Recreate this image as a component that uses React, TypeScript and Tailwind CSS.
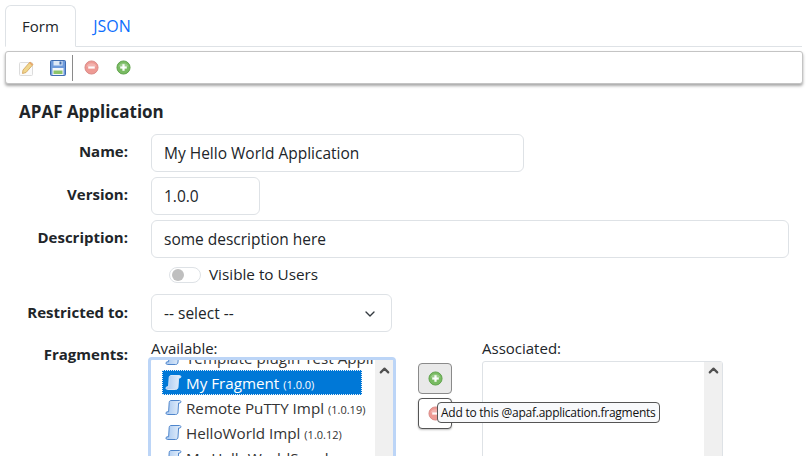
import { ChevronDown, ChevronUp } from 'lucide-react';

const font = { fontFamily: '"Open Sans", "Noto Sans", sans-serif' };

function PencilIcon() {
  return (
    <svg width="18" height="18" viewBox="0 0 18 18">
      <rect x="1.5" y="3.5" width="13" height="13" rx="1" fill="#fbfbfb" stroke="#dcdcdc" />
      <path d="M5 11 L12 3 L15 5.5 L8 13.5 L4.5 14.5 Z" fill="#f0d68c" stroke="#d9ae6a" strokeWidth="1" />
      <path d="M12 3 L15 5.5 L14 6.6 L11 4.1 Z" fill="#e8a56c" />
    </svg>
  );
}

function SaveIcon() {
  return (
    <svg width="18" height="18" viewBox="0 0 18 18">
      <rect x="1.5" y="1.5" width="15" height="15" rx="1" fill="#6f9bdc" stroke="#3f6cb0" />
      <rect x="4.5" y="2" width="9" height="4.5" fill="#dfe9f6" />
      <rect x="10.5" y="2.5" width="2" height="3" fill="#3f6cb0" />
      <rect x="3.5" y="9" width="11" height="7" fill="#f4f7fb" />
      <rect x="4.5" y="11.5" width="9" height="3.5" fill="#8cc46a" />
    </svg>
  );
}

function RoundIcon({ tone, plus }: { tone: 'red' | 'green'; plus?: boolean }) {
  const fill = tone === 'red' ? '#ee9a94' : '#79bb62';
  const edge = tone === 'red' ? '#d98a86' : '#5ea14b';
  return (
    <svg width="15" height="15" viewBox="0 0 16 16">
      <circle cx="8" cy="8" r="7" fill={fill} stroke={edge} />
      <path d="M2.5 7 A6 6 0 0 1 13.5 7 Z" fill="#ffffff" opacity="0.25" />
      <rect x="4.5" y="6.8" width="7" height="2.4" fill="#ffffff" opacity="0.95" />
      {plus && <rect x="6.8" y="4.5" width="2.4" height="7" fill="#ffffff" opacity="0.95" />}
    </svg>
  );
}

// parchment scroll used for fragments
function ScrollIcon({ light }: { light?: boolean }) {
  const stroke = light ? '#d5e5f8' : '#4f86cc';
  return (
    <svg width="17" height="17" viewBox="0 0 17 17" className="shrink-0">
      <defs>
        <linearGradient id="scrollFill" x1="0" y1="0" x2="1" y2="0">
          <stop offset="0" stopColor="#a8c8f0" />
          <stop offset="1" stopColor="#e6f0fb" />
        </linearGradient>
      </defs>
      <path
        d="M6 1.5 H14.5 C16 1.5 16.5 3.5 15 4 H13.6 L13 13 C12.9 15 11.8 15.5 10.5 15.5 H2.5 C.8 15.5 .3 13.3 2 12.8 H3.6 L4.2 3.5 C4.3 2.2 5 1.5 6 1.5 Z"
        fill="url(#scrollFill)"
        stroke={stroke}
        strokeWidth="1"
      />
    </svg>
  );
}

function Field({ label, children, className, labelClass }: { label: string; children: React.ReactNode; className?: string; labelClass?: string }) {
  return (
    <div className={`flex items-start ${className ?? ''}`}>
      <label className={`w-[128px] shrink-0 text-right text-[15px] leading-[21px] font-bold text-[#212529] ${labelClass ?? 'pt-[7px]'}`}>
        {label}
      </label>
      <div className="ml-[23px] min-w-0 flex-1">{children}</div>
    </div>
  );
}

function TextBox({ value, className }: { value: string; className: string }) {
  return (
    <div className={`flex h-[38px] items-center rounded-md border border-[#dee2e6] bg-white px-[12px] pt-[1px] text-[15.5px] text-[#212529] ${className}`}>
      {value}
    </div>
  );
}

function Scrollbar({ className }: { className: string }) {
  return (
    <div className={`flex w-[18px] shrink-0 justify-center bg-[#f0f0f0] text-[#505050] ${className}`}>
      <ChevronUp size={15} strokeWidth={3.5} />
    </div>
  );
}

function FragmentRow({ name, version }: { name: string; version: string }) {
  return (
    <div className="flex h-[25px] items-center gap-[4px] pl-[14px] text-[15.2px] whitespace-nowrap text-[#333]">
      <ScrollIcon />
      <span className="pt-[2px]">
        {name} <span className="text-[11px]">({version})</span>
      </span>
    </div>
  );
}

export default function App() {
  return (
    <div className="h-[456px] w-[812px] overflow-hidden bg-white" style={font}>
      <div className="px-[5px] pt-[5px]">
        {/* Tabs */}
        <div className="flex h-[42px] w-[797px] border-b border-[#dee2e6] text-[15px]">
          <div className="flex h-[42px] w-[71px] items-center justify-center rounded-t-md border border-[#dee2e6] border-b-white bg-white text-[#212529]">
            Form
          </div>
          <div className="flex h-[41px] w-[72px] items-center justify-center text-[16px] text-[#0d6efd]">JSON</div>
        </div>

        {/* Toolbar */}
        <div className="mt-[4px] flex h-[33px] w-[798px] items-center rounded-[3px] border border-[#c4c4c4] bg-white pl-[12px] shadow-[0_2px_3px_rgba(0,0,0,0.35)]">
          <PencilIcon />
          <div className="ml-[13px]"><SaveIcon /></div>
          <div className="ml-[5px] h-[26px] w-px bg-[#8a8a8a]" />
          <div className="ml-[11px]"><RoundIcon tone="red" /></div>
          <div className="ml-[17px]"><RoundIcon tone="green" plus /></div>
        </div>
      </div>

      <h2 className="mt-[16px] pl-[19px] text-[17px] leading-[24px] font-bold text-[#212529]">APAF Application</h2>

      <div className="mt-[10px] w-[789px]">
        <Field label="Name:">
          <TextBox value="My Hello World Application" className="w-[373px]" />
        </Field>
        <Field label="Version:" className="mt-[5px]">
          <TextBox value="1.0.0" className="w-[109px]" />
        </Field>
        <Field label="Description:" className="mt-[5px]">
          <TextBox value="some description here" className="w-full" />
        </Field>

        {/* Visible toggle */}
        <div className="mt-[6px] ml-[169px] flex h-[21px] items-center gap-[8px]">
          <div className="flex h-[16px] w-[32px] items-center rounded-full border border-[#dee2e6] pl-[2px]">
            <div className="h-[12px] w-[12px] rounded-full bg-[#bfbfbf]" />
          </div>
          <span className="text-[15.3px] text-[#212529]">Visible to Users</span>
        </div>

        <Field label="Restricted to:" className="mt-[9px]" labelClass="pt-[8px]">
          <div className="flex h-[38px] w-[241px] items-center justify-between rounded-md border border-[#dee2e6] bg-white pt-[1px] pr-[13px] pl-[12px] text-[15.5px] text-[#212529]">
            -- select --
            <ChevronDown size={16} strokeWidth={2} className="text-[#343a40]" />
          </div>
        </Field>

        <div className="mt-[6px] flex h-[120px] items-start">
          <label className="w-[128px] shrink-0 pt-[6px] text-right text-[15px] leading-[21px] font-bold text-[#212529]">
            Fragments:
          </label>
          <div className="relative ml-[23px] flex">
            {/* Available */}
            <div className="w-[244px]">
              <div className="h-[21px] text-[15px] leading-[20px] text-[#212529]">Available:</div>
              <div className="-mt-[2px] -ml-[3px] flex h-[112px] w-[248px] rounded-[4px] border-[3px] border-[#bcd5f7] bg-white">
                <div className="min-w-0 flex-1 overflow-hidden">
                  <div className="-mt-[15px] flex h-[25px] items-center gap-[4px] pl-[14px] text-[15.2px] whitespace-nowrap text-[#333]">
                    <ScrollIcon />
                    <span className="pt-[2px]">Template plugin Test Appli</span>
                  </div>
                  <div className="ml-[11px] flex h-[25px] w-[200px] items-center gap-[4px] border border-dotted border-[#e8f0fa] bg-[#0078d7] pl-[2px] text-[15.2px] whitespace-nowrap text-white">
                    <ScrollIcon light />
                    <span className="pt-[2px]">
                      My Fragment <span className="text-[11px]">(1.0.0)</span>
                    </span>
                  </div>
                  <FragmentRow name="Remote PuTTY Impl" version="1.0.19" />
                  <FragmentRow name="HelloWorld Impl" version="1.0.12" />
                  <FragmentRow name="My HelloWorldSpeak" version="1.0.1" />
                </div>
                <Scrollbar className="pt-[3px]" />
              </div>
            </div>

            {/* Move buttons */}
            <div className="mt-[25px] ml-[23px] flex w-[34px] flex-col gap-[4px]">
              <div className="flex h-[31px] items-center justify-center rounded-[4px] border border-[#8a8a8a] bg-[#e9e9e9]">
                <RoundIcon tone="green" plus />
              </div>
              <div className="flex h-[31px] items-center justify-center rounded-[4px] border border-[#555] bg-white shadow-[0_1px_2px_rgba(0,0,0,0.25)]">
                <RoundIcon tone="red" />
              </div>
            </div>

            {/* Associated */}
            <div className="ml-[30px] w-[241px]">
              <div className="h-[21px] text-[15px] leading-[20px] text-[#212529]">Associated:</div>
              <div className="mt-[2px] flex h-[110px] rounded-t-[3px] border border-[#dee2e6] bg-white">
                <div className="flex-1" />
                <Scrollbar className="pt-[1px]" />
              </div>
            </div>

            {/* Tooltip */}
            <div className="absolute top-[64px] left-[286px] flex h-[21px] items-center rounded-[4px] border border-[#555] bg-[#f8f9fb] px-[3px] text-[12px] tracking-[-0.25px] whitespace-nowrap text-[#111]">
              Add to this @apaf.application.fragments
            </div>
          </div>
        </div>
      </div>
    </div>
  );
}
